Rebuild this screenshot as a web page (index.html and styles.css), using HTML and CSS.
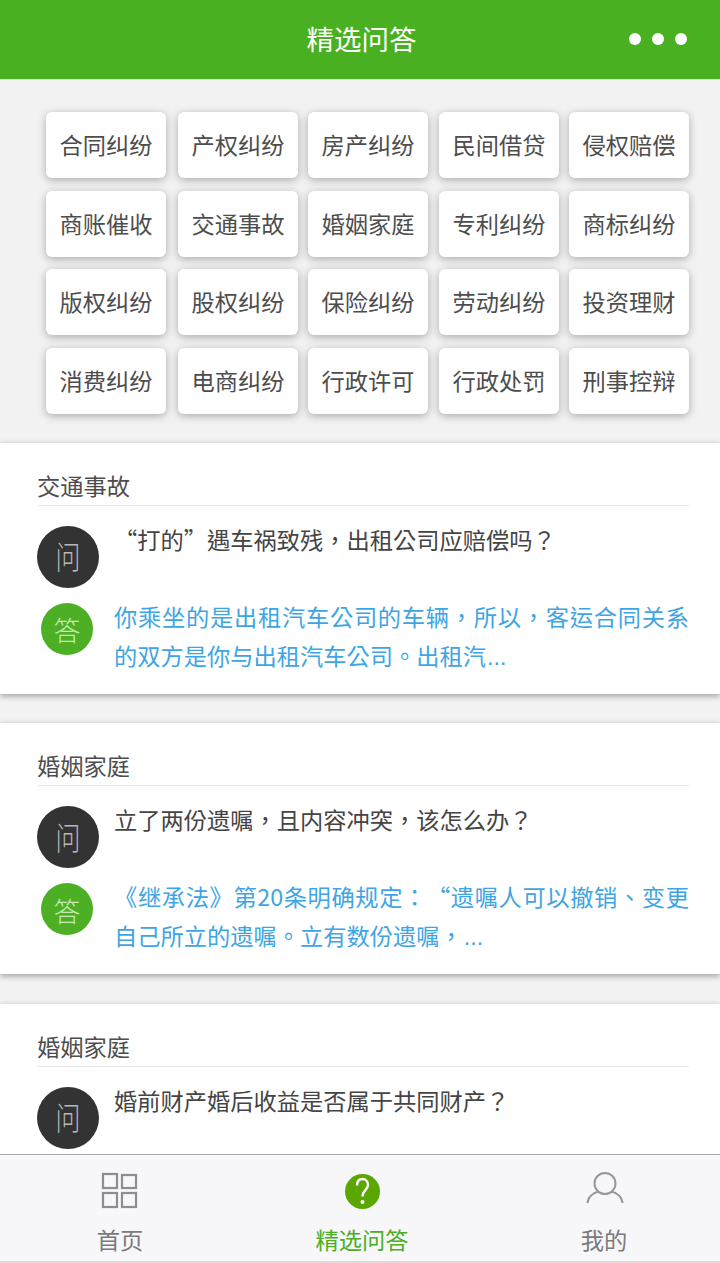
FILE: index.html
```html
<!DOCTYPE html>
<html lang="zh-CN">
<head>
<meta charset="utf-8">
<title>精选问答</title>
<link rel="stylesheet" href="styles.css">
</head>
<body>
<div class="app">
  <header class="topbar">
    <h1 class="topbar-title">精选问答</h1>
    <div class="dots"><i></i><i></i><i></i></div>
  </header>
  <main class="content">
    <nav class="cats">
      <a class="cat">合同纠纷</a><a class="cat">产权纠纷</a><a class="cat">房产纠纷</a><a class="cat">民间借贷</a><a class="cat">侵权赔偿</a>
      <a class="cat">商账催收</a><a class="cat">交通事故</a><a class="cat">婚姻家庭</a><a class="cat">专利纠纷</a><a class="cat">商标纠纷</a>
      <a class="cat">版权纠纷</a><a class="cat">股权纠纷</a><a class="cat">保险纠纷</a><a class="cat">劳动纠纷</a><a class="cat">投资理财</a>
      <a class="cat">消费纠纷</a><a class="cat">电商纠纷</a><a class="cat">行政许可</a><a class="cat">行政处罚</a><a class="cat">刑事控辩</a>
    </nav>
    <article class="card">
      <h2 class="card-title">交通事故</h2>
      <div class="q-row"><span class="badge-q"><b>问</b></span><p class="q-text" lang="zh-TW">“打的”遇车祸致残，出租公司应赔偿吗？</p></div>
      <div class="a-row"><span class="badge-a">答</span><div class="a-text" lang="zh-TW"><p class="a-full">你乘坐的是出租汽车公司的车辆，所以，客运合同关系</p><p class="a-last">的双方是你与出租汽车公司。出租汽<span class="ell">...</span></p></div></div>
    </article>
    <article class="card">
      <h2 class="card-title">婚姻家庭</h2>
      <div class="q-row"><span class="badge-q"><b>问</b></span><p class="q-text" lang="zh-TW">立了两份遗嘱，且内容冲突，该怎么办？</p></div>
      <div class="a-row"><span class="badge-a">答</span><div class="a-text" lang="zh-TW"><p class="a-full">《继承法》第20条明确规定：“遗嘱人可以撤销、变更</p><p class="a-last">自己所立的遗嘱。立有数份遗嘱，<span class="ell">...</span></p></div></div>
    </article>
    <article class="card">
      <h2 class="card-title">婚姻家庭</h2>
      <div class="q-row"><span class="badge-q"><b>问</b></span><p class="q-text" lang="zh-TW">婚前财产婚后收益是否属于共同财产？</p></div>
    </article>
  </main>
  <footer class="tabbar">
    <a class="tab">
      <svg class="tab-icon" viewBox="0 0 40 40" width="40" height="40" fill="none" stroke="#8e8e8e" stroke-width="2.2"><rect x="3" y="2" width="14" height="14"/><rect x="22" y="3" width="14" height="13"/><rect x="3" y="21" width="14" height="14"/><rect x="22" y="21" width="14" height="14"/></svg>
      <span>首页</span>
    </a>
    <a class="tab tab-on">
      <svg class="tab-icon" viewBox="0 0 40 40" width="40" height="40"><circle cx="20.5" cy="19.5" r="17.5" fill="#5aa700"/><path d="M15 13.5C15 9 17.5 7 20.5 7S26 9 26 13C26 17.5 20.5 18.5 20.5 24.5" fill="none" stroke="#fff" stroke-width="2.4"/><circle cx="20.5" cy="30" r="2" fill="#fff"/></svg>
      <span>精选问答</span>
    </a>
    <a class="tab">
      <svg class="tab-icon" viewBox="0 0 40 40" width="40" height="40" fill="none" stroke="#979797" stroke-width="2"><circle cx="21" cy="11.5" r="10.5"/><path d="M3.5 31C4 25 9 20.5 15 19.5M38.5 31C38 25 33 20.5 27 19.5"/></svg>
      <span>我的</span>
    </a>
  </footer>
</div>
</body>
</html>
```
FILE: styles.css
```css
* { box-sizing: border-box; }
html, body { margin: 0; padding: 0; height: 100%; overflow: hidden; }
body {
  font-family: "Noto Sans CJK SC", "Liberation Sans", sans-serif;
  background: #f2f2f2;
  color: #4d4d4d;
  text-spacing-trim: space-all;
}
.app { display: flex; flex-direction: column; height: 1263px; width: 720px; overflow: hidden; }

.topbar {
  flex: none;
  height: 80px;
  padding: 0 0 2px 3px;
  background: #49b022;
  border-bottom: 1px solid #d8e8d0;
  display: flex;
  align-items: center;
  justify-content: center;
  position: relative;
}
.topbar-title { margin: 0; font-size: 27.5px; font-weight: 400; color: #fff; line-height: 1; }
.dots { position: absolute; right: 33px; top: 33px; display: flex; gap: 11px; }
.dots i { width: 12px; height: 12px; border-radius: 50%; background: #fff; display: block; }

.content { flex: 1; min-height: 0; overflow: hidden; }

.cats {
  display: grid;
  grid-template-columns: 132px 130px 131px 130px 120px;
  grid-auto-rows: 66px;
  row-gap: 12.67px;
  padding: 32px 31px 29px 46px;
}
.cat {
  width: 120px;
  padding-bottom: 2px;
  display: flex;
  align-items: center;
  justify-content: center;
  background: #fff;
  border-radius: 6px;
  box-shadow: 0 2px 8px rgba(0, 0, 0, .3);
  font-size: 23.25px;
  color: #4d4d4d;
  white-space: nowrap;
}

.card {
  background: #fff;
  height: 251px;
  margin-bottom: 29.5px;
  padding: 26px 31px 0 37px;
  box-shadow: 0 2px 6px rgba(0, 0, 0, .35);
}
.card-title {
  margin: 0;
  height: 37px;
  border-bottom: 1px solid #e8e8e8;
  font-size: 23.25px;
  font-weight: 400;
  line-height: 33px;
  color: #4d4d4d;
}
.q-row { display: flex; margin-top: 20px; height: 62px; }
.badge-q {
  flex: none;
  width: 62px;
  height: 62px;
  border-radius: 50%;
  background: #333;
  color: #b8b8b8;
  font-size: 32px;
  display: flex;
  align-items: center;
  justify-content: center;
}
.badge-q b { display: block; margin-top: -3px; font-weight: 300; transform: scaleX(.78); line-height: 1; }
.q-text {
  margin: -5px 0 0 15px;
  font-family: "Noto Sans CJK TC", "Noto Sans CJK SC", sans-serif;
  font-size: 23.25px;
  line-height: 36px;
  color: #444;
  white-space: nowrap;
}
.a-row { display: flex; margin-top: 9px; }
.badge-a {
  flex: none;
  width: 52px;
  height: 52px;
  margin: 6px 0 0 4px;
  padding-top: 2px;
  border-radius: 50%;
  background: #4db024;
  color: #c4ebb2;
  font-size: 27px;
  font-weight: 300;
  display: flex;
  align-items: center;
  justify-content: center;
}
.a-text {
  flex: 1;
  margin: 0 0 0 21px;
  font-family: "Noto Sans CJK TC", "Noto Sans CJK SC", sans-serif;
  font-size: 23.25px;
  line-height: 39px;
  color: #3ea5e4;
}
.a-full { margin: 0; text-align: justify; text-align-last: justify; }
.a-last { margin: 0; }
.ell { margin-left: 1px; font-family: "Liberation Sans", sans-serif; }

.tabbar {
  flex: none;
  height: 109px;
  background: #f7f7fa;
  border-top: 1px solid #a8a8a8;
  border-bottom: 2px solid #dcdcdc;
  display: grid;
  grid-template-columns: 240px 244px 240px;
}
.tab {
  display: flex;
  flex-direction: column;
  align-items: center;
  font-size: 23.25px;
  color: #7a7a7a;
  line-height: 32px;
  padding-top: 17px;
}
.tab-icon { display: block; margin-bottom: 11px; }
.tab-on { color: #4cae25; }
```
